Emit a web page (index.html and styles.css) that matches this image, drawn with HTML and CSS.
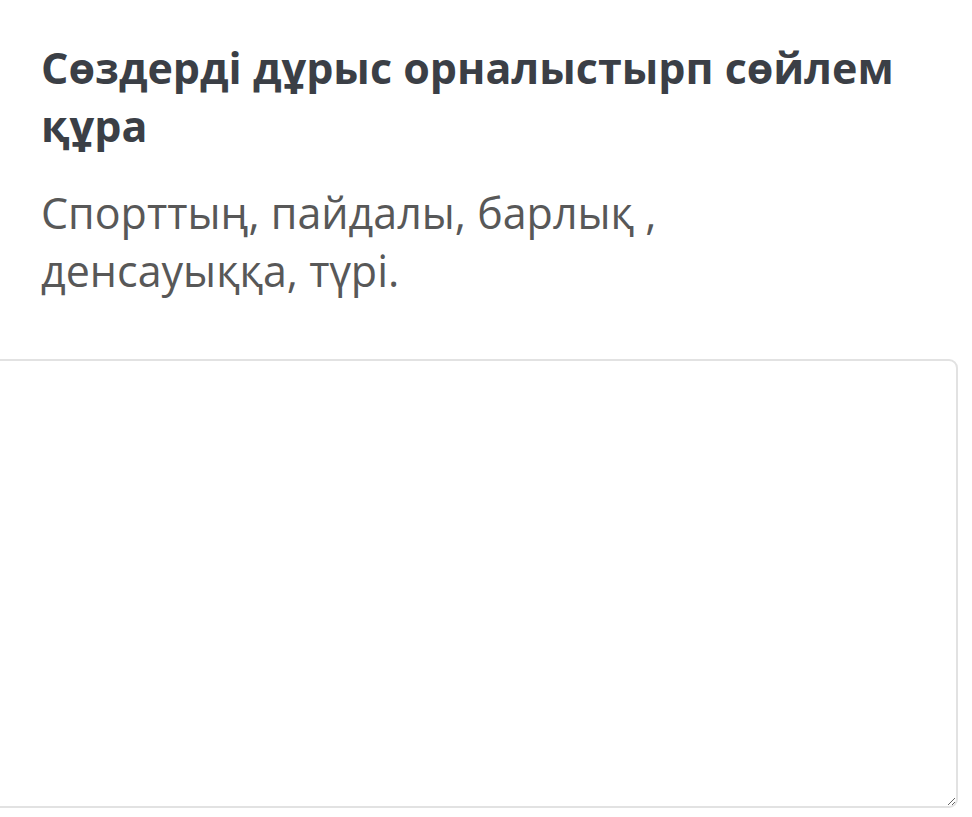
FILE: index.html
```html
<!DOCTYPE html>
<html lang="kk">
<head>
<meta charset="utf-8">
<link rel="stylesheet" href="styles.css">
</head>
<body>
<main class="question">
  <div class="content">
    <h2 class="title">Сөздерді дұрыс орналыстырп сөйлем құра</h2>
    <p class="text">Спорттың, пайдалы, барлық ,<br>денсауыққа, түрі.</p>
  </div>
  <textarea class="answer"></textarea>
</main>
</body>
</html>
```

FILE: styles.css
```css
html, body {
  margin: 0;
  padding: 0;
  background: #ffffff;
}
.question {
  display: flex;
  flex-direction: column;
  width: 972px;
}
.content {
  padding: 39px 40px 0 41px;
}
.title {
  margin: 0;
  font-family: "Open Sans", sans-serif;
  font-weight: 700;
  font-size: 43px;
  line-height: 58px;
  color: #3b3f46;
}
.text {
  margin: 29px 0 0;
  font-family: "Open Sans", sans-serif;
  font-weight: 400;
  font-size: 43px;
  line-height: 58px;
  color: #585858;
}
.answer {
  margin: 59px 0 0 -20px;
  width: 978px;
  height: 449px;
  box-sizing: border-box;
  border: 2px solid #e2e2e2;
  border-radius: 9px;
  background: #ffffff;
  resize: both;
  outline: none;
}
```
